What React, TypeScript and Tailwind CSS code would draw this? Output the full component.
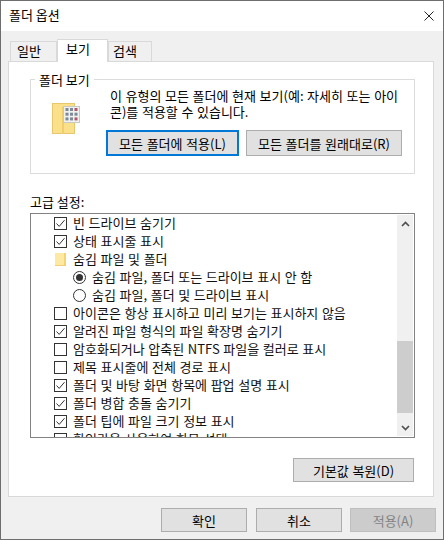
import type { ReactNode } from "react";

const FONT = "font-['Noto_Sans_CJK_KR','Noto_Sans',sans-serif]";

type Row =
  | { kind: "check"; label: string; checked: boolean }
  | { kind: "radio"; label: string; checked: boolean }
  | { kind: "folder"; label: string };

const ROWS: Row[] = [
  { kind: "check", label: "빈 드라이브 숨기기", checked: true },
  { kind: "check", label: "상태 표시줄 표시", checked: true },
  { kind: "folder", label: "숨김 파일 및 폴더" },
  { kind: "radio", label: "숨김 파일, 폴더 또는 드라이브 표시 안 함", checked: true },
  { kind: "radio", label: "숨김 파일, 폴더 및 드라이브 표시", checked: false },
  { kind: "check", label: "아이콘은 항상 표시하고 미리 보기는 표시하지 않음", checked: false },
  { kind: "check", label: "알려진 파일 형식의 파일 확장명 숨기기", checked: true },
  { kind: "check", label: "암호화되거나 압축된 NTFS 파일을 컬러로 표시", checked: false },
  { kind: "check", label: "제목 표시줄에 전체 경로 표시", checked: false },
  { kind: "check", label: "폴더 및 바탕 화면 항목에 팝업 설명 표시", checked: true },
  { kind: "check", label: "폴더 병합 충돌 숨기기", checked: true },
  { kind: "check", label: "폴더 팁에 파일 크기 정보 표시", checked: true },
  { kind: "check", label: "확인란을 사용하여 항목 선택", checked: false },
];

function CheckBox({ checked }: { checked: boolean }) {
  return (
    <span className="mr-[6px] flex h-[13px] w-[13px] shrink-0 items-center justify-center border border-[#333333] bg-white">
      {checked && (
        <svg width="11" height="11" viewBox="0 0 11 11" fill="none">
          <path d="M1.5 5.5 L4.2 8.4 L9.5 2.2" stroke="#333333" strokeWidth="1" />
        </svg>
      )}
    </span>
  );
}

function Radio({ checked }: { checked: boolean }) {
  return (
    <span className="mr-[6px] ml-[19px] flex h-[13px] w-[13px] shrink-0 items-center justify-center rounded-full border border-[#333333] bg-white">
      {checked && <span className="h-[7px] w-[7px] rounded-full bg-[#333333]" />}
    </span>
  );
}

function SmallFolder() {
  return (
    <svg className="mr-[6px] shrink-0" width="13" height="18" viewBox="0 0 13 18">
      <rect x="1" y="3" width="11" height="13" fill="#fde9a3" />
      <rect x="10" y="3" width="2" height="13" fill="#f5d36f" />
      <rect x="1" y="15" width="11" height="1" fill="#f0cf72" />
    </svg>
  );
}

function BigFolder() {
  return (
    <svg width="28" height="32" viewBox="0 0 28 32">
      <rect x="0.5" y="0.5" width="22" height="30" fill="#fbe08c" stroke="#e6c76d" />
      <rect x="10" y="4" width="2" height="27" fill="#f0ce6a" />
      <rect x="11.5" y="3.5" width="16" height="16" fill="#f1f1ee" stroke="#c8c8c4" />
      {[0, 1, 2].map((r) =>
        [0, 1, 2].map((c) => (
          <rect
            key={`${r}-${c}`}
            x={13.5 + c * 4.5}
            y={5 + r * 4.7}
            width="3"
            height="3"
            fill={(r === 0 && c === 2) || (r === 2 && c === 2) ? "#b2566b" : "#7b8a97"}
          />
        )),
      )}
    </svg>
  );
}

function Button({
  children,
  className = "",
}: {
  children: ReactNode;
  className?: string;
}) {
  return (
    <button
      type="button"
      className={`flex items-center justify-center text-[13px] leading-none [word-spacing:0.7px] ${className}`}
    >
      {children}
    </button>
  );
}

const PLAIN = "border border-[#adadad] bg-[#e1e1e1] text-black";

function Tab({ label, className }: { label: string; className: string }) {
  return (
    <div className={`border border-b-0 border-[#d9d9d9] text-[13px] leading-[18px] ${className}`}>
      {label}
    </div>
  );
}

function OptionRow({ row }: { row: Row }) {
  return (
    <div className="flex h-[18px] shrink-0 items-center pl-[23px] text-[13px] whitespace-nowrap text-[#111111] [word-spacing:0.7px]">
      {row.kind === "check" && <CheckBox checked={row.checked} />}
      {row.kind === "radio" && <Radio checked={row.checked} />}
      {row.kind === "folder" && <SmallFolder />}
      <span>{row.label}</span>
    </div>
  );
}

function ScrollBar() {
  return (
    <div className="my-[1px] flex w-[16px] shrink-0 flex-col bg-[#f0f0f0]">
      <div className="flex h-[17px] items-center justify-center">
        <svg width="9" height="6" viewBox="0 0 9 6" fill="none">
          <path d="M1 5 L4.5 1.5 L8 5" stroke="#505050" strokeWidth="1.7" />
        </svg>
      </div>
      <div className="h-[109px]" />
      <div className="h-[72px] bg-[#cdcdcd]" />
      <div className="flex-1" />
      <div className="flex h-[17px] items-center justify-center">
        <svg width="9" height="6" viewBox="0 0 9 6" fill="none">
          <path d="M1 1 L4.5 4.5 L8 1" stroke="#505050" strokeWidth="1.7" />
        </svg>
      </div>
    </div>
  );
}

export default function App() {
  return (
    <div className={`flex h-[540px] w-[444px] flex-col overflow-hidden border border-[#6e6e6e] bg-[#f0f0f0] text-black ${FONT}`}>
      <div className="flex h-[30px] shrink-0 items-center justify-between bg-white pr-[9px] pl-[8px]">
        <span className="pb-[2px] text-[13px]">폴더 옵션</span>
        <svg width="10" height="10" viewBox="0 0 10 10" fill="none">
          <path d="M0.5 0.5 L9.5 9.5 M9.5 0.5 L0.5 9.5" stroke="#222222" strokeWidth="1" />
        </svg>
      </div>

      <div className="flex flex-1 flex-col px-[7px] pt-[8px]">
        <div className="flex h-[22px] shrink-0 pl-[2px]">
          <Tab label="일반" className="mt-[2px] h-[20px] w-[47px] bg-[#f0f0f0] pl-[6px]" />
          <Tab label="보기" className="relative z-10 h-[23px] w-[51px] bg-white pl-[8px]" />
          <Tab label="검색" className="mt-[2px] h-[20px] w-[44px] bg-[#f0f0f0] pl-[4px]" />
        </div>

        <div className="flex h-[436px] w-[426px] shrink-0 flex-col border border-[#d9d9d9] bg-white pt-[17px] pr-[18px] pl-[21px]">
          <div className="relative flex h-[95px] w-[385px] shrink-0 border border-[#dcdcdc]">
            <div className="absolute -top-[9px] left-[4px] bg-white px-[4px] text-[13px] leading-[17px]">폴더 보기</div>
            <div className="shrink-0 pt-[23px] pl-[21px]">
              <BigFolder />
            </div>
            <div className="pt-[8px] pl-[26px]">
              <p className="pl-[4px] text-[13px] leading-[16px] whitespace-nowrap [word-spacing:0.7px]">
                이 유형의 모든 폴더에 현재 보기(예: 자세히 또는 아이
                <br />
                콘)를 적용할 수 있습니다.
              </p>
              <div className="mt-[10px] flex gap-[7px]">
                <Button className="h-[26px] w-[133px] border-2 border-[#0078d7] bg-[#e1e1e1] text-black">모든 폴더에 적용(L)</Button>
                <Button className={`h-[26px] w-[156px] ${PLAIN}`}>모든 폴더를 원래대로(R)</Button>
              </div>
            </div>
          </div>

          <div className="mt-[19px] mb-[3px] text-[13px] leading-[17px]">고급 설정:</div>

          <div className="flex h-[225px] w-[385px] shrink-0 overflow-hidden border border-[#828282] bg-white pr-[1px]">
            <div className="flex min-w-0 flex-1 flex-col overflow-hidden">
              {ROWS.map((row) => (
                <OptionRow key={row.label} row={row} />
              ))}
            </div>
            <ScrollBar />
          </div>

          <div className="mt-[20px] flex justify-end">
            <Button className={`mr-[1px] h-[24px] w-[121px] ${PLAIN}`}>기본값 복원(D)</Button>
          </div>
        </div>

        <div className="mt-[11px] flex justify-end">
          <Button className={`mr-[9px] h-[24px] w-[86px] ${PLAIN}`}>확인</Button>
          <Button className={`mr-[8px] h-[24px] w-[86px] ${PLAIN}`}>취소</Button>
          <Button className="h-[24px] w-[86px] border border-[#bfbfbf] bg-[#cccccc] text-[#838383]">적용(A)</Button>
        </div>
      </div>
    </div>
  );
}
